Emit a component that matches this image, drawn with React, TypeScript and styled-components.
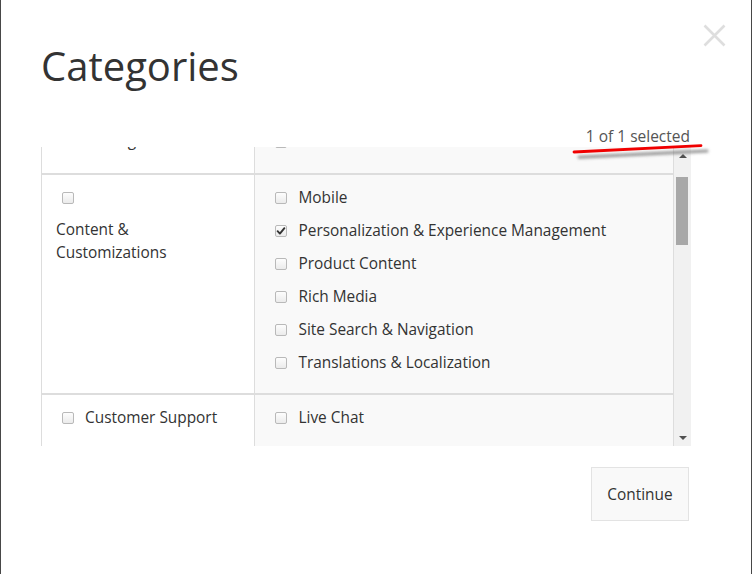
import React, { useLayoutEffect, useRef } from "react";
import styled, { createGlobalStyle } from "styled-components";

const Global = createGlobalStyle`
  html, body { margin: 0; padding: 0; }
  body {
    background: #474747;
    font-family: "Open Sans", "Noto Sans", sans-serif;
    color: #333;
  }
`;

const Page = styled.div`
  position: relative;
  margin: 0 1px;
  height: 574px;
  box-sizing: border-box;
  background: #fff;
  padding: 24px 0 0 40px;
  overflow: hidden;
`;

const Header = styled.header`
  display: flex;
  justify-content: space-between;
  align-items: flex-start;
  width: 685px;
`;

const Title = styled.h1`
  margin: 20px 0 0;
  font-size: 40px;
  font-weight: 400;
  line-height: 44px;
  color: #333;
`;

const CloseButton = styled.button`
  display: block;
  width: 23px;
  height: 23px;
  padding: 0;
  border: 0;
  background: none;
  cursor: pointer;
`;

const Body = styled.section`
  width: 650px;
`;

const Count = styled.div`
  margin-top: 37px;
  text-align: right;
  font-size: 15.5px;
  line-height: 22px;
  color: #555;
  padding-right: 1px;
`;

const TableFrame = styled.div`
  display: flex;
  height: 299px;
`;

const Scroller = styled.div`
  flex: 1;
  overflow: hidden;
  border-left: 1px solid #ddd;
  border-right: 1px solid #ddd;
`;

const Row = styled.div`
  display: grid;
  grid-template-columns: 213px 1fr;
  border-bottom: 2px solid #ddd;
`;

const LeftCell = styled.div<{ $stacked?: boolean }>`
  display: flex;
  flex-direction: ${(p) => (p.$stacked ? "column" : "row")};
  align-items: flex-start;
  gap: ${(p) => (p.$stacked ? "9px" : "11px")};
  padding: 11px 14px;
  font-size: 15.4px;
  line-height: 23px;
  color: #333;
  border-right: 1px solid #ddd;
  background: #fff;
`;

const CheckLine = styled.div`
  display: flex;
  align-items: center;
  height: 23px;
`;

const LeftLabel = styled.span<{ $stacked?: boolean }>`
  max-width: ${(p) => (p.$stacked ? "150px" : "none")};
`;

const RightCell = styled.div<{ $padBottom?: number }>`
  display: flex;
  flex-direction: column;
  gap: 10px;
  padding: 11px 20px ${(p) => p.$padBottom ?? 19}px;
  background: #f9f9f9;
`;

const Item = styled.label`
  display: flex;
  align-items: center;
  gap: 11.5px;
  font-size: 15.4px;
  line-height: 23px;
  color: #333;
`;

const Box = styled.span<{ $inset?: boolean }>`
  display: inline-flex;
  align-items: center;
  justify-content: center;
  flex: none;
  width: 12px;
  height: 12px;
  box-sizing: border-box;
  margin-left: ${(p) => (p.$inset ? "6px" : "0")};
  margin-top: 1px;
  border: 1px solid #b9b9b9;
  border-radius: 2px;
  background: linear-gradient(#fdfdfd, #ebebeb);
`;

const Scrollbar = styled.div`
  display: flex;
  flex-direction: column;
  width: 17px;
  background: #f1f1f1;
`;

const ArrowButton = styled.div<{ $down?: boolean }>`
  height: 17px;
  display: flex;
  align-items: center;
  justify-content: center;
  &::before {
    content: "";
    width: 0;
    height: 0;
    border-left: 4px solid transparent;
    border-right: 4px solid transparent;
    ${(p) =>
      p.$down
        ? "border-top: 4px solid #505050;"
        : "border-bottom: 4px solid #505050;"}
  }
`;

const Track = styled.div`
  flex: 1;
  padding-left: 2px;
`;

const Thumb = styled.div<{ $offset: number; $size: number }>`
  width: 12px;
  margin-top: ${(p) => p.$offset}px;
  height: ${(p) => p.$size}px;
  background: #a8a8a8;
`;

const Footer = styled.div`
  display: flex;
  justify-content: flex-end;
  margin-top: 21px;
  padding-right: 2px;
`;

const ContinueButton = styled.button`
  width: 98px;
  height: 54px;
  background: #f9f9f9;
  border: 1px solid #e3e3e3;
  border-radius: 0;
  font-family: "Open Sans", "Noto Sans", sans-serif;
  font-size: 15.4px;
  color: #333;
  cursor: pointer;
`;

const Annotation = styled.svg`
  position: absolute;
  left: 569px;
  top: 140px;
  pointer-events: none;
`;

function Check({ checked, inset }: { checked?: boolean; inset?: boolean }) {
  return (
    <Box $inset={inset}>
      {checked && (
        <svg width="10" height="10" viewBox="0 0 10 10">
          <path
            d="M1.6 5.2 L3.9 7.6 L8.4 2.2"
            fill="none"
            stroke="#333"
            strokeWidth="1.9"
            strokeLinecap="round"
            strokeLinejoin="round"
          />
        </svg>
      )}
    </Box>
  );
}

type Category = {
  name: string;
  stacked?: boolean;
  padBottom?: number;
  items: { label: string; checked?: boolean }[];
};

const categories: Category[] = [
  {
    name: "Advertising",
    stacked: true,
    padBottom: 20,
    items: [{ label: "Affiliates" }, { label: "Retail Media" }],
  },
  {
    name: "Content & Customizations",
    stacked: true,
    items: [
      { label: "Mobile" },
      { label: "Personalization & Experience Management", checked: true },
      { label: "Product Content" },
      { label: "Rich Media" },
      { label: "Site Search & Navigation" },
      { label: "Translations & Localization" },
    ],
  },
  {
    name: "Customer Support",
    items: [{ label: "Live Chat" }],
  },
  {
    name: "Fulfillment",
    items: [
      { label: "Inventory Management" },
      { label: "Order Management" },
      { label: "Shipping" },
    ],
  },
  {
    name: "Payments",
    items: [{ label: "Fraud Protection" }, { label: "Payment Processing" }],
  },
];

export default function App() {
  const scrollRef = useRef<HTMLDivElement>(null);

  useLayoutEffect(() => {
    if (scrollRef.current) scrollRef.current.scrollTop = 61;
  }, []);

  return (
    <>
      <Global />
      <Page>
        <Header>
          <Title>Categories</Title>
          <CloseButton aria-label="Close">
            <svg width="23" height="23" viewBox="0 0 23 23">
              <path
                d="M1.5 1.5 L21.5 21.5 M21.5 1.5 L1.5 21.5"
                stroke="#dedede"
                strokeWidth="2.6"
              />
            </svg>
          </CloseButton>
        </Header>
        <Body>
          <Count>1 of 1 selected</Count>
          <TableFrame>
            <Scroller ref={scrollRef}>
              {categories.map((c) => (
                <Row key={c.name}>
                  <LeftCell $stacked={c.stacked}>
                    <CheckLine>
                      <Check inset />
                    </CheckLine>
                    <LeftLabel $stacked={c.stacked}>{c.name}</LeftLabel>
                  </LeftCell>
                  <RightCell $padBottom={c.padBottom}>
                    {c.items.map((it) => (
                      <Item key={it.label}>
                        <Check checked={it.checked} />
                        {it.label}
                      </Item>
                    ))}
                  </RightCell>
                </Row>
              ))}
            </Scroller>
            <Scrollbar>
              <ArrowButton />
              <Track>
                <Thumb $offset={13} $size={68} />
              </Track>
              <ArrowButton $down />
            </Scrollbar>
          </TableFrame>
          <Footer>
            <ContinueButton>Continue</ContinueButton>
          </Footer>
        </Body>
        <Annotation width="145" height="24" viewBox="0 0 145 24">
          <defs>
            <filter id="blur" x="-10%" y="-100%" width="120%" height="300%">
              <feGaussianBlur stdDeviation="1.4" />
            </filter>
          </defs>
          <path
            d="M9 17.2 L137 11"
            stroke="#6a6a6a"
            strokeOpacity="0.7"
            strokeWidth="3"
            strokeLinecap="round"
            filter="url(#blur)"
          />
          <path
            d="M4 12 L131 5.6"
            stroke="#f00000"
            strokeWidth="2.8"
            strokeLinecap="round"
          />
        </Annotation>
      </Page>
    </>
  );
}
